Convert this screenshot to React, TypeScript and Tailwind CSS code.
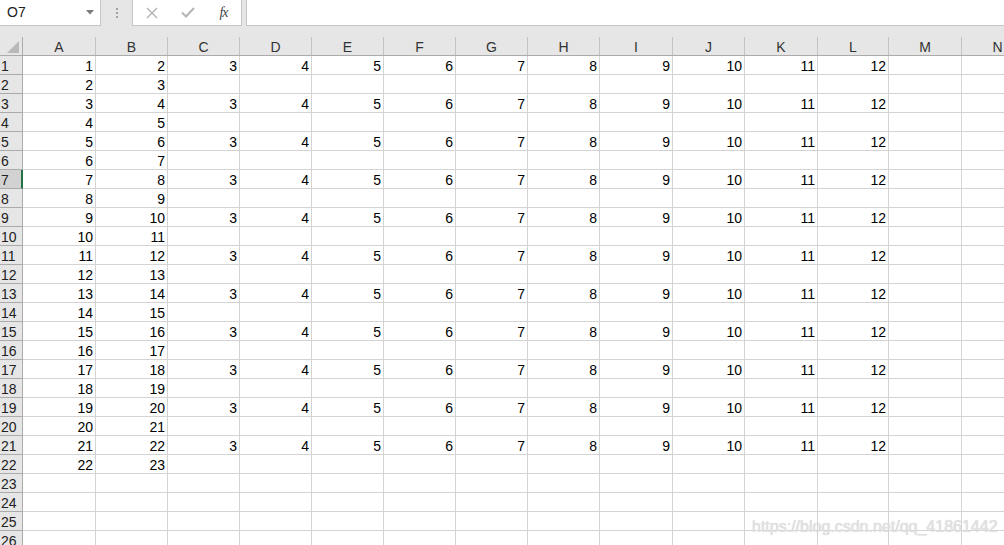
import React from 'react';

const COLS = [
  { key: 'A', w: 'w-[73px]' },
  { key: 'B', w: 'w-[72px]' },
  { key: 'C', w: 'w-[72px]' },
  { key: 'D', w: 'w-[72px]' },
  { key: 'E', w: 'w-[72px]' },
  { key: 'F', w: 'w-[72px]' },
  { key: 'G', w: 'w-[72px]' },
  { key: 'H', w: 'w-[72px]' },
  { key: 'I', w: 'w-[73px]' },
  { key: 'J', w: 'w-[72px]' },
  { key: 'K', w: 'w-[73px]' },
  { key: 'L', w: 'w-[71px]' },
  { key: 'M', w: 'w-[73px]' },
  { key: 'N', w: 'w-[72px]' },
];

const ROWS = Array.from({ length: 26 }, (_, i) => i + 1);

// value shown in a cell, or '' when empty
const cellValue = (row: number, col: number): string => {
  if (row > 22) return '';
  if (col === 0) return String(row);
  if (col === 1) return String(row + 1);
  if (row % 2 === 1 && row <= 21 && col <= 11) return String(col + 1);
  return '';
};

const FormulaBar: React.FC = () => (
  <div className="h-[37px] bg-[#e6e6e6] flex items-start shrink-0">
    {/* Name box */}
    <div className="w-[101px] h-[26px] bg-white border-b border-r border-[#c6c6c6] flex items-center justify-between pl-[7px] pr-[6px]">
      <span className="text-[14px] text-[#222]">O7</span>
      <svg width="8" height="5" viewBox="0 0 8 5">
        <path d="M0 0 L8 0 L4 4.5 Z" fill="#7a7a7a" />
      </svg>
    </div>
    <div className="w-[31px] h-[26px] flex items-center justify-center">
      <div className="flex flex-col gap-[2px]">
        <span className="w-[2px] h-[2px] bg-[#a0a0a0]" />
        <span className="w-[2px] h-[2px] bg-[#a0a0a0]" />
        <span className="w-[2px] h-[2px] bg-[#a0a0a0]" />
      </div>
    </div>
    {/* Cancel / enter / fx */}
    <div className="w-[110px] h-[26px] bg-white border border-t-0 border-[#c6c6c6] flex items-center">
      <div className="w-[37px] flex justify-center">
        <svg width="12" height="12" viewBox="0 0 12 12">
          <path d="M1 1 L11 11 M11 1 L1 11" stroke="#b4b4b4" strokeWidth="1.4" />
        </svg>
      </div>
      <div className="w-[36px] flex justify-center">
        <svg width="14" height="11" viewBox="0 0 14 11">
          <path d="M1 5.5 L5 9.5 L13 1" stroke="#b4b4b4" strokeWidth="2" fill="none" />
        </svg>
      </div>
      <div className="w-[35px] flex justify-center">
        <span className="text-[14px] italic text-[#444] font-['Liberation_Serif',serif] tracking-[-1px]">fx</span>
      </div>
    </div>
    <div className="w-[4px]" />
    <div className="flex-1 h-[26px] bg-white border-l border-b border-[#c6c6c6]" />
  </div>
);

const HeaderRow: React.FC = () => (
  <div className="h-[19px] flex bg-[#e6e6e6] border-b border-[#ababab] shrink-0">
    <div className="w-[23px] shrink-0 border-r border-[#ababab] flex items-end justify-end pr-[3px] pb-[2px]">
      <svg width="12" height="12" viewBox="0 0 12 12">
        <path d="M12 0 L12 12 L0 12 Z" fill="#b9b9b9" />
      </svg>
    </div>
    {COLS.map((c) => (
      <div
        key={c.key}
        className={`${c.w} shrink-0 border-r border-[#c2c2c2] flex items-center justify-center text-[14px] text-[#333] leading-none pt-[2px]`}
      >
        {c.key}
      </div>
    ))}
  </div>
);

const App: React.FC = () => {
  return (
    <div className="w-[1004px] h-[545px] overflow-hidden bg-white relative flex flex-col font-['Liberation_Sans',sans-serif]">
      <FormulaBar />
      <HeaderRow />
      {ROWS.map((r) => (
        <div key={r} className="h-[19px] flex shrink-0">
          <div
            className={
              r === 7
                ? 'w-[23px] shrink-0 bg-[#d2d2d2] border-b border-[#ababab] border-r-2 border-r-[#217346] flex items-end pl-[1px] text-[14px] text-[#222] leading-[16px]'
                : 'w-[23px] shrink-0 bg-[#e6e6e6] border-b border-r border-[#ababab] flex items-end pl-[1px] text-[14px] text-[#222] leading-[16px]'
            }
          >
            {r}
          </div>
          {COLS.map((c, ci) => (
            <div
              key={c.key}
              className={`${c.w} shrink-0 border-r border-b border-[#d4d4d4] flex items-end justify-end pr-[2px] text-[14px] text-black leading-[16px]`}
            >
              {cellValue(r, ci)}
            </div>
          ))}
        </div>
      ))}
      {/* watermark */}
      <div className="absolute left-[752px] top-[515px] text-[16px] text-[#e2e2e2] whitespace-nowrap [text-shadow:0_0_1px_#c8c8c8]">
        https://blog.csdn.net/qq_41861442
      </div>
    </div>
  );
};

export default App;
